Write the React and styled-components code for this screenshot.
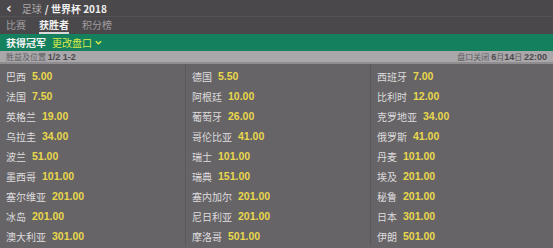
import styled, { createGlobalStyle } from "styled-components";

const GlobalStyle = createGlobalStyle`
  html, body {
    margin: 0;
    padding: 0;
    background: #666466;
    font-family: "Noto Sans CJK SC", "Liberation Sans", sans-serif;
  }
`;

const columns = [
  [
    ["巴西", "5.00"],
    ["法国", "7.50"],
    ["英格兰", "19.00"],
    ["乌拉圭", "34.00"],
    ["波兰", "51.00"],
    ["墨西哥", "101.00"],
    ["塞尔维亚", "201.00"],
    ["冰岛", "201.00"],
    ["澳大利亚", "301.00"],
  ],
  [
    ["德国", "5.50"],
    ["阿根廷", "10.00"],
    ["葡萄牙", "26.00"],
    ["哥伦比亚", "41.00"],
    ["瑞士", "101.00"],
    ["瑞典", "151.00"],
    ["塞内加尔", "201.00"],
    ["尼日利亚", "201.00"],
    ["摩洛哥", "501.00"],
  ],
  [
    ["西班牙", "7.00"],
    ["比利时", "12.00"],
    ["克罗地亚", "34.00"],
    ["俄罗斯", "41.00"],
    ["丹麦", "101.00"],
    ["埃及", "201.00"],
    ["秘鲁", "201.00"],
    ["日本", "301.00"],
    ["伊朗", "501.00"],
  ],
];

export default function App() {
  return (
    <Page>
      <GlobalStyle />
      <TopBar>
        <BackArrow>‹</BackArrow>
        <Crumb>足球</Crumb>
        <CrumbCurrent>/ 世界杯 2018</CrumbCurrent>
      </TopBar>
      <Tabs>
        <Tab>比赛</Tab>
        <Tab $active>获胜者</Tab>
        <Tab>积分榜</Tab>
      </Tabs>
      <MarketBar>
        <MarketTitle>获得冠军</MarketTitle>
        <ChangeLink>
          更改盘口
          <svg width="9" height="9" viewBox="0 0 10 10">
            <path d="M2 3.5 L5 6.5 L8 3.5" fill="none" stroke="#d6ea4a" strokeWidth="1.6" />
          </svg>
        </ChangeLink>
      </MarketBar>
      <InfoBar>
        <span>胜益及位置 <b>1/2 1-2</b></span>
        <span>盘口关闭 <b>6</b>月<b>14</b>日 <b>22:00</b></span>
      </InfoBar>
      <Grid>
        {columns.map((col, ci) => (
          <Column key={ci} $first={ci === 0}>
            {col.map(([name, odds]) => (
              <Row key={name}>
                <Name>{name}</Name>
                <Odds>{odds}</Odds>
              </Row>
            ))}
          </Column>
        ))}
      </Grid>
    </Page>
  );
}

const Page = styled.div`
  width: 553px;
  height: 248px;
  overflow: hidden;
  background: #666466;
`;

const TopBar = styled.div`
  height: 16px;
  display: flex;
  align-items: center;
  gap: 6px;
  padding: 0 6px;
  background: #4b484b;
  font-size: 10px;
`;

const BackArrow = styled.span`
  color: #e6e6e6;
  font-family: "DejaVu Sans", sans-serif;
  font-size: 14px;
  font-weight: bold;
  line-height: 16px;
  margin-right: 4px;
`;

const Crumb = styled.span`
  color: #a9a7a9;
`;

const CrumbCurrent = styled.span`
  color: #f0f0f0;
  font-weight: bold;
  margin-left: -3px;
`;

const Tabs = styled.div`
  height: 18px;
  display: flex;
  gap: 13px;
  padding: 0 6px;
  background: #4b484b;
  border-top: 1px solid #545154;
  box-sizing: border-box;
`;

const Tab = styled.div`
  font-size: 10px;
  line-height: 15px;
  color: ${(p) => (p.$active ? "#f2f2f2" : "#9e9c9e")};
  font-weight: ${(p) => (p.$active ? "bold" : "normal")};
  border-bottom: 2px solid ${(p) => (p.$active ? "#d8d8d8" : "transparent")};
`;

const MarketBar = styled.div`
  height: 17px;
  display: flex;
  align-items: center;
  gap: 6px;
  padding: 0 6px;
  background: #15805d;
  font-size: 10px;
`;

const MarketTitle = styled.span`
  color: #f4f4f4;
  font-weight: bold;
`;

const ChangeLink = styled.span`
  display: flex;
  align-items: center;
  gap: 2px;
  color: #d6ea4a;
`;

const InfoBar = styled.div`
  height: 11px;
  display: flex;
  justify-content: space-between;
  align-items: center;
  padding: 0 6px;
  background: #a9a7aa;
  border-bottom: 2px solid #8f8d90;
  font-size: 8px;
  color: #5e5c5f;

  b {
    font-family: "Liberation Sans", sans-serif;
    font-size: 9px;
    color: #4a484b;
  }
`;

const Grid = styled.div`
  display: grid;
  grid-template-columns: 185px 185px 183px;
`;

const Column = styled.div`
  display: flex;
  flex-direction: column;
  padding-top: 2px;
  border-left: ${(p) => (p.$first ? "none" : "1px solid #5a585a")};
`;

const Row = styled.div`
  height: 20px;
  display: flex;
  align-items: center;
  gap: 6px;
  padding-left: 6px;
`;

const Name = styled.span`
  font-size: 10px;
  color: #dedcde;
`;

const Odds = styled.span`
  font-family: "Liberation Sans", sans-serif;
  font-weight: bold;
  font-size: 10.5px;
  color: #e9d84c;
`;
